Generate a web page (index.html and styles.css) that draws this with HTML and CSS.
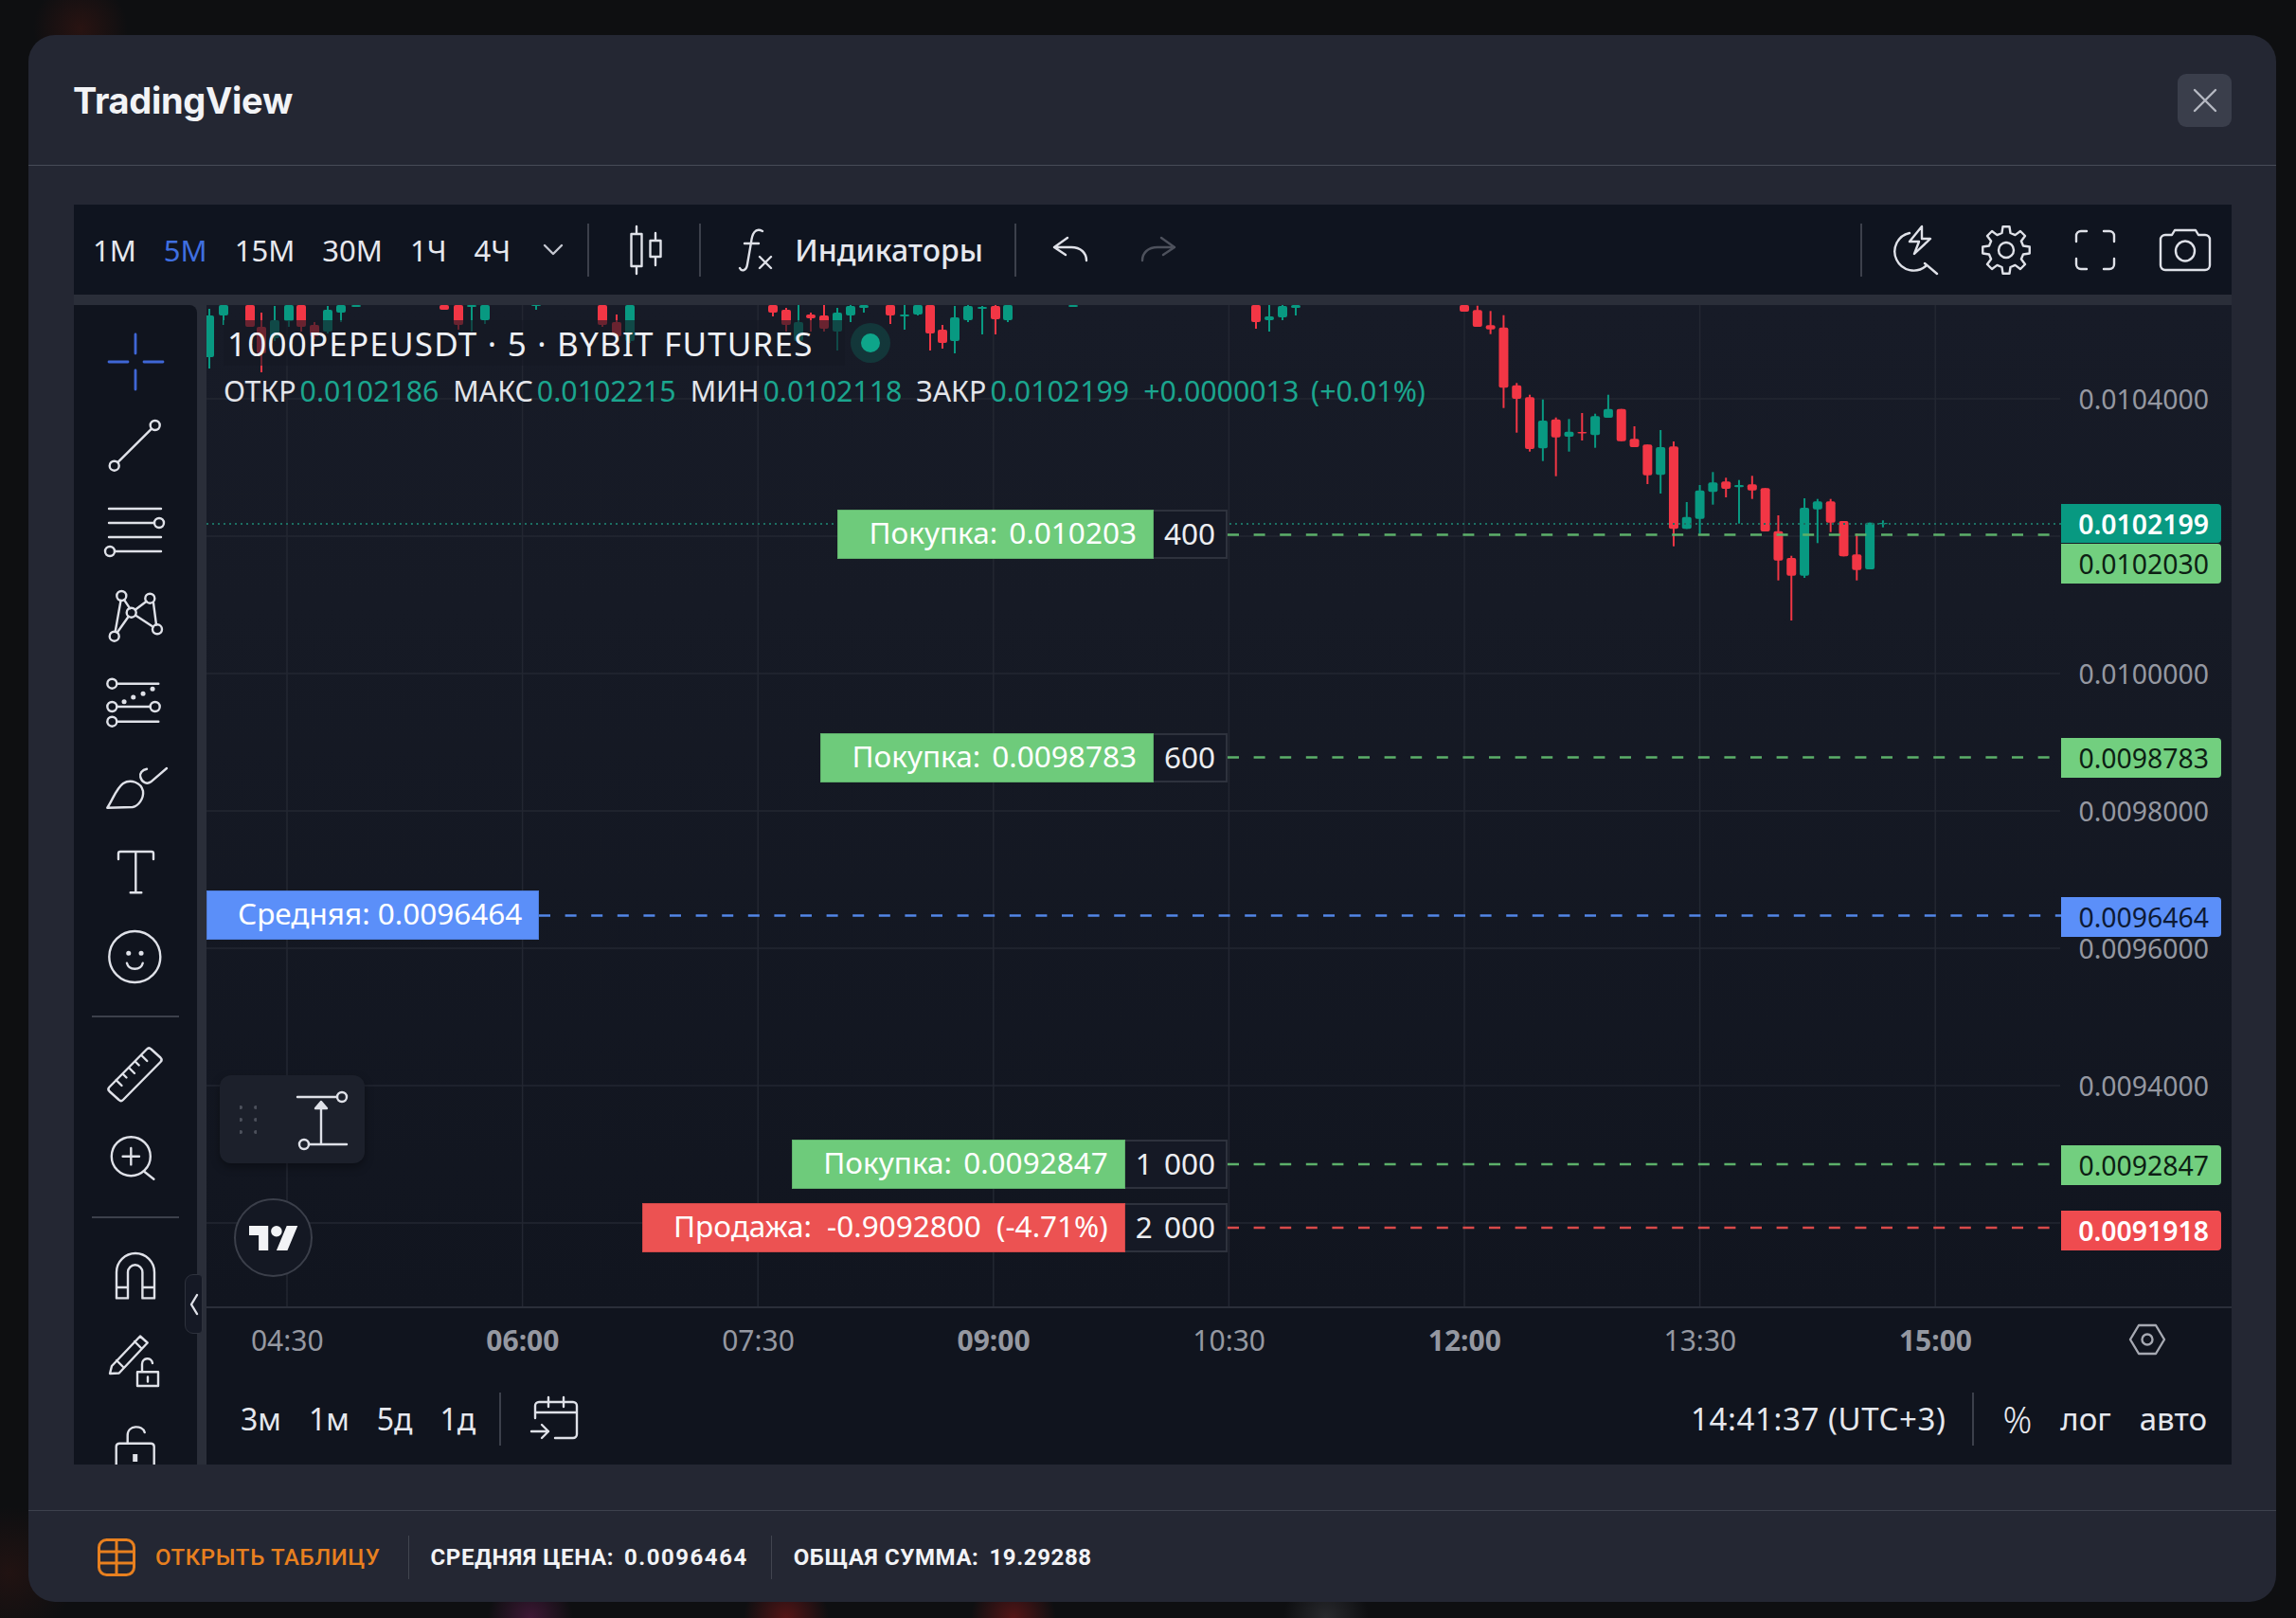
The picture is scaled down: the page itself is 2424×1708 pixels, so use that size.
FILE: index.html
```html
<!DOCTYPE html>
<html lang="ru">
<head>
  <meta charset="UTF-8">
  <title>TradingView</title>
  <link rel="stylesheet" href="styles.css">
</head>
<body>
  <div class="modal">
    <header class="modal-head">
      <h2 class="modal-title">TradingView</h2>
      <button class="close-btn" type="button">
        <svg class="ico" width="24" height="24" viewBox="0 0 24 24"><path d="M1 1l22 22M23 1L1 23"/></svg>
      </button>
    </header>

    <div class="modal-body">
      <div class="tv">
        <!-- top toolbar -->
        <div class="top-bar">
          <div class="intervals">
            <span>1М</span>
            <span class="active">5М</span>
            <span>15М</span>
            <span>30М</span>
            <span>1Ч</span>
            <span>4Ч</span>
          </div>
          <svg class="ico chevron" width="20" height="12" viewBox="0 0 20 12"><path d="M1 1l9 9 9-9"/></svg>
          <i class="sep sep-a"></i>
          <svg class="ico candle-ico" width="40" height="50" viewBox="0 0 40 50"><path d="M10 0v8M10 42v8M30 7v8M30 32v9M4.500 8h11v34h-11zM24.500 15h11v17h-11z"/></svg>
          <i class="sep sep-b"></i>
          <svg class="ico fx-ico" width="36" height="50" viewBox="0 0 36 50"><path d="M24 5C16 1 13 8 12 17L8 40C7 47 2 48 0 44M5 18H20M21 32l12 12M33 32L21 44"/></svg>
          <span class="indicators">Индикаторы</span>
          <i class="sep sep-c"></i>
          <svg class="ico undo-ico" width="38" height="30" viewBox="0 0 38 30"><path d="M16 2L2 12l12 8M2 12h18c10 0 16 6 16 14"/></svg>
          <svg class="ico redo-ico" width="38" height="30" viewBox="0 0 38 30"><path d="M22 2l14 10-12 8M36 12H18C8 12 2 18 2 26"/></svg>

          <i class="sep sep-d"></i>
          <svg class="ico flash-ico" width="48" height="54" viewBox="0 0 48 54"><path d="M17 9A20 20 0 1 0 34 44M33 41l13 11M30 2L17 18h10l-5 13 17-16h-9z"/></svg>
          <svg class="ico gear-ico" width="52" height="52" viewBox="0 0 52 52">
            <path d="M21.500 8L22.500 1.250h7L30.500 8 35.500 10.100 41 6l5 5-4.100 5.500 2.100 5 6.750 1v7l-6.750 1-2.100 5L46 41l-5 5-5.500-4.100-5 2.100-1 6.750h-7l-1-6.750-5-2.100L11 46l-5-5 4.100-5.500-2.100-5-6.750-1v-7l6.750-1 2.100-5L6 11l5-5 5.500 4.100z"/>
            <circle cx="26" cy="26" r="8"/>
          </svg>
          <svg class="ico frame-ico" width="42" height="42" viewBox="0 0 42 42"><path d="M1 12V6a5 5 0 0 1 5-5h6M30 1h6a5 5 0 0 1 5 5v6M41 30v6a5 5 0 0 1-5 5h-6M12 41H6a5 5 0 0 1-5-5v-6"/></svg>
          <svg class="ico camera-ico" width="54" height="46" viewBox="0 0 54 46"><path d="M6 7h7l3-5h22l3 5h7a5 5 0 0 1 5 5v27a5 5 0 0 1-5 5H6a5 5 0 0 1-5-5V12a5 5 0 0 1 5-5z"/><ellipse cx="27" cy="24" rx="10" ry="10.500"/></svg>
        </div>

        <div class="tv-main">
          <!-- drawing tools -->
          <aside class="rail">
            <div class="tool"><svg class="ico blue" width="60" height="60" viewBox="0 0 60 60"><path d="M30 1v20M30 39v20M2 30h20M39 30h20"/></svg></div>
            <div class="tool"><svg class="ico" width="60" height="60" viewBox="0 0 60 60"><circle cx="50.700" cy="7" r="5"/><circle cx="7.700" cy="49.700" r="5"/><path d="M11.300 46.100L47 10.700"/></svg></div>
            <div class="tool"><svg class="ico" width="60" height="60" viewBox="0 0 60 60"><path d="M2 5h55M2 20h48M2 35h55M8 50h49"/><circle cx="55" cy="20" r="5"/><circle cx="3" cy="50" r="5"/></svg></div>
            <div class="tool"><svg class="ico" width="60" height="60" viewBox="0 0 60 60"><circle cx="15.300" cy="7" r="5"/><circle cx="45.300" cy="9.700" r="5"/><circle cx="25.700" cy="24.700" r="5"/><circle cx="53" cy="42.300" r="5"/><circle cx="7.700" cy="49.700" r="5"/><path d="M14.500 12L8.700 44.800M10.700 45.700l12-17M18.200 11.300l6 9M29.700 21.700l12-9M49 14.500l3 23M30 27.500L48.700 39.700"/></svg></div>
            <div class="tool"><svg class="ico" width="60" height="60" viewBox="0 0 60 60"><circle cx="5.300" cy="9.700" r="5"/><path d="M10.300 9.700h44"/><circle cx="5.300" cy="34" r="5"/><circle cx="50.700" cy="34" r="5"/><path d="M10.300 34h35.400"/><circle cx="5.300" cy="49.700" r="5"/><path d="M10.300 49.700h44"/><path class="dots" d="M18 28.700h.1M27.700 24h.1M38 20.300h.1M48 15.300h.1"/></svg></div>
            <div class="tool"><svg class="ico" width="60" height="60" viewBox="0 0 60 60"><path d="M.3 50.700C6 42 10 30 17 25c8-5 19-1 21 8 1 8-5 16-11 17zM42 9.700c-5 1-8 5-6.700 8.600 1.700 6 7 8 11 5L63 9"/></svg></div>
            <div class="tool"><svg class="ico" width="60" height="60" viewBox="0 0 60 60"><path d="M12 15V9a2 2 0 0 1 2-2h33a2 2 0 0 1 2 2v6M30.300 7v43.300M24.700 50.300h11.600"/></svg></div>
            <div class="tool"><svg class="ico" width="60" height="60" viewBox="0 0 60 60"><circle cx="29.300" cy="28" r="27"/><path class="dots" d="M22.700 24.300h.1M36 24.300h.1"/><path d="M21 34.700c2 8 14.700 8 16.700 0"/></svg></div>
            <div class="rail-line"></div>
            <div class="tool"><svg class="ico" width="60" height="60" viewBox="0 0 60 60"><path d="M42 3.500c1.500-1.500 3-1.500 4.500 0l10 9c1.500 1.500 1.500 3 0 4.500L17 57c-1.500 1.500-3 1.500-4.500 0l-10-9c-1.500-1.500-1.500-3 0-4.500zM9.500 36l6 6M16.500 29.500l4 4M23 23l6 6M29.700 16.500l4 4M36.300 10l6 6"/></svg></div>
            <div class="tool"><svg class="ico" width="60" height="60" viewBox="0 0 60 60"><circle cx="25.300" cy="26.700" r="20.500"/><path d="M25.300 18v17.400M16.600 26.700H34M39.600 43l9.800 7.700"/></svg></div>
            <div class="rail-line"></div>
            <div class="tool"><svg class="ico" width="60" height="60" viewBox="0 0 60 60"><path d="M10 54.400V27a20 20 0 0 1 40 0v27.400H37.400V27a7.700 7.700 0 0 0-15.400 0v27.400zM10 43h12M37.400 43H50"/></svg></div>
            <div class="tool"><svg class="ico" width="60" height="60" viewBox="0 0 60 60"><path d="M3 44l2-8L35 4.500l7.700 7-30 32zM10 30l7 7M29 10l7 7M32 42.300h22v14.700H32zM37 42V34c0-7 10-8 11-1M43 47.500v5"/></svg></div>
            <div class="tool"><svg class="ico" width="60" height="60" viewBox="0 0 60 60"><path d="M9.700 62V31a3.500 3.500 0 0 1 3.500-3.300h33a3.500 3.500 0 0 1 3.500 3.300v31M21.700 27.700V19c0-11 16-11 18-3"/><path class="keyhole" d="M29.700 39v8"/></svg></div>
            <div class="rail-handle"><svg class="ico" width="10" height="22" viewBox="0 0 10 22"><path d="M8 1L2 11l6 10"/></svg></div>
          </aside>

          <div class="chart-col">
            <div class="chart">
              <svg class="chart-svg" width="2138" height="1058" viewBox="218 322 2138 1058">
                <g id="grid"></g>
                <g id="candles"></g>
                <line class="last-line" x1="218" y1="553" x2="2176" y2="553"/>
                <line class="dash dash-buy" x1="1296" y1="564.500" x2="2176" y2="564.500"/>
                <line class="dash dash-buy" x1="1296" y1="799.500" x2="2176" y2="799.500"/>
                <line class="dash dash-avg" x1="569" y1="966.500" x2="2176" y2="966.500"/>
                <line class="dash dash-buy" x1="1296" y1="1229" x2="2176" y2="1229"/>
                <line class="dash dash-sell" x1="1296" y1="1296" x2="2176" y2="1296"/>
              </svg>

              <div class="legend">
                <div class="legend-title">
                  <span>1000PEPEUSDT · 5 · BYBIT FUTURES</span>
                  <i class="live-dot"></i>
                </div>
                <div class="legend-ohlc">
                  <span class="pair">ОТКР<b>0.0102186</b></span>
                  <span class="pair">МАКС<b>0.0102215</b></span>
                  <span class="pair">МИН<b>0.0102118</b></span>
                  <span class="pair">ЗАКР<b>0.0102199</b></span>
                  <span class="pair"><b class="change">+0.0000013 (+0.01%)</b></span>
                </div>
              </div>

              <!-- price scale -->
              <span class="tick tick-a">0.0104000</span>
              <span class="tick tick-b">0.0100000</span>
              <span class="tick tick-c">0.0098000</span>
              <span class="tick tick-d">0.0096000</span>
              <span class="tick tick-e">0.0094000</span>

              <span class="tag tag-last">0.0102199</span>
              <span class="tag tag-buy tag-1">0.0102030</span>
              <span class="tag tag-buy tag-2">0.0098783</span>
              <span class="tag tag-avg tag-3">0.0096464</span>
              <span class="tag tag-buy tag-4">0.0092847</span>
              <span class="tag tag-sell tag-5">0.0091918</span>

              <!-- orders -->
              <div class="order order-1"><span class="order-label buy">Покупка: 0.010203</span><span class="order-qty">400</span></div>
              <div class="order order-2"><span class="order-label buy">Покупка: 0.0098783</span><span class="order-qty">600</span></div>
              <div class="order order-3"><span class="order-label avg">Средняя: 0.0096464</span></div>
              <div class="order order-4"><span class="order-label buy">Покупка: 0.0092847</span><span class="order-qty">1 000</span></div>
              <div class="order order-5"><span class="order-label sell">Продажа: -0.9092800 (-4.71%)</span><span class="order-qty">2 000</span></div>

              <!-- floating drawing panel -->
              <div class="float-panel">
                <svg class="grip" width="18" height="30" viewBox="0 0 18 30"><path d="M1 2h.1M17 2h.1M1 15h.1M17 15h.1M1 28h.1M17 28h.1"/></svg>
                <svg class="ico" width="60" height="64" viewBox="0 0 60 64"><path d="M3 8h42M28 58V14M15 58h40"/><circle cx="50" cy="8" r="5"/><circle cx="10" cy="58" r="5"/><path class="fill" d="M28 13l-6 7h12z"/></svg>
              </div>

              <a class="tv-logo"><svg width="52" height="26" viewBox="0 4 36 18"><path d="M14 22H7V11H0V4h14v18zM28 22h-8l7.500-18h8L28 22z"/><circle cx="20" cy="8" r="4"/></svg></a>
            </div>

            <div class="time-axis">
              <span>04:30</span>
              <span class="major">06:00</span>
              <span>07:30</span>
              <span class="major">09:00</span>
              <span>10:30</span>
              <span class="major">12:00</span>
              <span>13:30</span>
              <span class="major">15:00</span>
              <svg class="ico hex-ico" width="38" height="34" viewBox="0 0 38 34"><path d="M10 2h18l9 15-9 15H10L1 17z"/><circle cx="19" cy="17" r="5.500"/></svg>
            </div>

            <div class="range-bar">
              <div class="ranges">
                <span>3м</span>
                <span>1м</span>
                <span>5д</span>
                <span>1д</span>
              </div>
              <i class="sep sep-e"></i>
              <svg class="ico cal-ico" width="52" height="48" viewBox="0 0 52 48"><path d="M5 23V10a4 4 0 0 1 4-4h36a4 4 0 0 1 4 4v30a4 4 0 0 1-4 4H26M5 17h44M19 1v10M35 1v10M1 37h18M12 30l7 7-7 7"/></svg>
              <div class="range-right">
                <span class="clock">14:41:37 (UTC+3)</span>
                <i class="sep sep-f"></i>
                <span class="pct">%</span>
                <span>лог</span>
                <span>авто</span>
              </div>
            </div>
          </div>
        </div>
      </div>
    </div>

    <footer class="modal-foot">
      <svg class="table-ico" width="40" height="40" viewBox="0 0 40 40"><rect x="1.500" y="1.500" width="37" height="37" rx="8"/><path d="M20 2v36M2 14h36M2 26h36"/></svg>
      <span class="open-table">ОТКРЫТЬ ТАБЛИЦУ</span>
      <i class="foot-sep"></i>
      <span class="stat stat-avg"><span>СРЕДНЯЯ ЦЕНА:</span><span>0.0096464</span></span>
      <i class="foot-sep"></i>
      <span class="stat"><span>ОБЩАЯ СУММА:</span><span>19.29288</span></span>
    </footer>
  </div>

  <script src="chart.js"></script>
</body>
</html>
```

FILE: styles.css
```css
* {
  margin: 0;
  padding: 0;
  box-sizing: border-box;
}
body {
  width: 2424px;
  height: 1708px;
  padding: 37px 21px 17px 30px;
  overflow: hidden;
  font-family: "Noto Sans", sans-serif;
  color: #e6e8ee;
  background-color: #0e0f11;
  background-image:
    radial-gradient(circle at 85px 30px, rgba(110, 30, 20, .28), transparent 50px),
    radial-gradient(circle at 10px 1660px, rgba(90, 30, 20, .25), transparent 70px),
    radial-gradient(circle at 560px 1708px, rgba(150, 40, 120, .35), transparent 45px),
    radial-gradient(circle at 830px 1708px, rgba(190, 30, 30, .4), transparent 45px),
    radial-gradient(circle at 1070px 1708px, rgba(190, 30, 30, .4), transparent 45px),
    radial-gradient(circle at 1400px 1708px, rgba(120, 120, 130, .25), transparent 45px);
}

.modal {
  width: 2373px;
  height: 1654px;
  display: flex;
  flex-direction: column;
  background: #242733;
  border-radius: 28px;
}
.modal-head {
  flex: none;
  height: 138px;
  display: flex;
  align-items: center;
  justify-content: space-between;
  padding: 0 47px 0 47px;
  border-bottom: 1px solid #474b57;
}
.modal-title {
  font-family: Inter, sans-serif;
  font-size: 38px;
  font-weight: 700;
  letter-spacing: -.3px;
  color: #f2f3f6;
}
.close-btn {
  width: 57px;
  height: 56px;
  display: flex;
  align-items: center;
  justify-content: center;
  background: #3a3e4b;
  border: none;
  border-radius: 9px;
}
.close-btn .ico {
  stroke: #b5b8c2;
}

.modal-body {
  flex: 1;
  min-height: 0;
  padding: 41px 47px 48px 48px;
}
.modal-foot {
  flex: none;
  height: 97px;
  display: flex;
  align-items: center;
  padding: 2px 0 0 73px;
  border-top: 1px solid #3d414d;
  font-family: Roboto, sans-serif;
  font-size: 24px;
  letter-spacing: .6px;
}
.table-ico {
  fill: none;
  stroke: #e8801f;
  stroke-width: 3;
}
.open-table {
  margin: 0 29px 0 21px;
  font-weight: 500;
  color: #e8801f;
}
.foot-sep {
  width: 1px;
  height: 46px;
  background: #41454f;
}
.stat {
  display: flex;
  gap: 11px;
  margin: 0 24px 0 23px;
  font-weight: 700;
  color: #f2f3f6;
}
.stat-avg span:last-child {
  letter-spacing: 1.5px;
}

.tv {
  height: 100%;
  display: flex;
  flex-direction: column;
  gap: 11px;
  background: #2a2e39;
}
.top-bar {
  flex: none;
  height: 95px;
  display: flex;
  align-items: center;
  background: #0f141f;
  font-size: 31px;
}
.intervals {
  display: flex;
  gap: 29px;
  margin-left: 20px;
}
.active {
  color: #3f6fe0;
}
.indicators {
  margin-left: 22px;
  font-size: 32px;
  font-weight: 500;
}
.ico {
  flex: none;
  display: block;
  fill: none;
  stroke: #dfe1e8;
  stroke-width: 2.4;
  stroke-linecap: round;
  stroke-linejoin: round;
  overflow: visible;
}
.ico .dots {
  stroke-width: 5;
}
.ico .fill {
  fill: #dfe1e8;
}
.ico .keyhole {
  stroke-width: 5;
  stroke-linecap: butt;
}
.ico.blue {
  stroke: #3f66d6;
  stroke-width: 2.8;
}
.chevron {
  margin-left: 35px;
  stroke: #c4c7d0;
}
.sep {
  flex: none;
  width: 2px;
  height: 56px;
  background: #3c404b;
}
.sep-a {
  margin-left: 26px;
}
.candle-ico {
  margin-left: 40px;
}
.sep-b {
  margin-left: 36px;
}
.fx-ico {
  margin-left: 41px;
}
.sep-c {
  margin-left: 33px;
}
.undo-ico {
  margin-left: 38px;
}
.redo-ico {
  margin-left: 55px;
  stroke: #4d515c;
}
.sep-d {
  margin-left: auto;
}
.flash-ico {
  margin-left: 33px;
}
.gear-ico {
  margin-left: 45px;
}
.frame-ico {
  margin-left: 47px;
}
.camera-ico {
  margin: 0 22px 0 47px;
}

.tv-main {
  flex: 1;
  min-height: 0;
  display: flex;
  gap: 10px;
  overflow: hidden;
}
.rail {
  position: relative;
  z-index: 2;
  flex: none;
  width: 130px;
  padding-top: 15px;
  background: #10141e;
  border-radius: 0 8px 0 0;
}
.tool {
  height: 90px;
  display: flex;
  align-items: center;
  justify-content: center;
}
.rail-line {
  height: 2px;
  margin: 15px 19px;
  background: #3c404b;
}
.rail-handle {
  position: absolute;
  top: 1023px;
  right: -6px;
  width: 19px;
  height: 63px;
  display: flex;
  align-items: center;
  justify-content: center;
  background: #151925;
  border: 1px solid #2e323d;
  border-radius: 9px 4px 4px 9px;
}

.chart-col {
  flex: 1;
  min-width: 0;
  display: flex;
  flex-direction: column;
  background: #10141e;
}
.chart {
  position: relative;
  flex: none;
  height: 1059px;
  background: linear-gradient(#171b27, #161a25 30%, #11151f);
  border-bottom: 2px solid #2a2e39;
  overflow: hidden;
}
.chart-svg {
  display: block;
}
.grid-line {
  stroke: #232732;
  stroke-width: 1.5;
}
.wick {
  stroke-width: 2;
}
.up {
  fill: #089981;
  stroke: #089981;
}
.down {
  fill: #f23645;
  stroke: #f23645;
}
.body {
  stroke: none;
}
.last-line {
  stroke: #1c6f62;
  stroke-width: 2;
  stroke-dasharray: 2 4;
}
.dash {
  stroke-width: 2.5;
  stroke-dasharray: 12 15.600;
}
.dash-buy {
  stroke: #5cb06a;
}
.dash-avg {
  stroke: #5286e8;
}
.dash-sell {
  stroke: #d94a4a;
}

.legend {
  position: absolute;
  top: 16px;
  left: 18px;
}
.legend-title {
  width: 656px;
  height: 48px;
  display: flex;
  align-items: center;
  padding-left: 4px;
  font-size: 35px;
  letter-spacing: 1.2px;
  color: #eef0f4;
  background: rgba(21, 25, 36, .62);
}
.legend-title span {
  flex: none;
  white-space: nowrap;
}
.live-dot {
  flex: none;
  width: 20px;
  height: 20px;
  margin-left: 50px;
  background: #0ea58a;
  border-radius: 50%;
  box-shadow: 0 0 0 11px rgba(8, 153, 129, .22);
}
.legend-ohlc {
  display: flex;
  gap: 15px;
  margin-top: 6px;
  font-size: 30.300px;
  white-space: nowrap;
  color: #e3e5ea;
}
.pair b {
  margin-left: 4px;
  font-weight: 400;
  color: #1ba58e;
}
.pair .change {
  margin-left: 0;
  word-spacing: 5px;
}

.tick {
  position: absolute;
  right: 24px;
  line-height: 24px;
  font-size: 28.400px;
  color: #9598a1;
}
.tick-a { top: 87px; }
.tick-b { top: 377px; }
.tick-c { top: 522px; }
.tick-d { top: 667px; }
.tick-e { top: 812px; }

.tag {
  position: absolute;
  right: 11px;
  width: 169px;
  height: 42px;
  padding-right: 13px;
  line-height: 42px;
  text-align: right;
  font-size: 28.400px;
  color: #0d1f14;
  border-radius: 0 4px 4px 0;
}
.tag-last {
  top: 210px;
  height: 41px;
  font-weight: 600;
  color: #fff;
  background: #089981;
}
.tag-buy { background: #72cf7f; }
.tag-avg {
  color: #0d1a35;
  background: #5b8ff9;
}
.tag-sell {
  font-weight: 600;
  color: #fff;
  background: #ef4b4f;
}
.tag-1 { top: 252px; }
.tag-2 { top: 457px; }
.tag-3 { top: 625px; }
.tag-4 { top: 887px; }
.tag-5 { top: 956px; }

.order {
  position: absolute;
  right: 1060px;
  height: 52px;
  display: flex;
  font-size: 31.500px;
  line-height: 46px;
  word-spacing: 4px;
  white-space: nowrap;
}
.order-1 { top: 216px; }
.order-2 { top: 452px; }
.order-3 {
  top: 618px;
  right: auto;
  left: 0;
}
.order-4 { top: 881px; }
.order-5 { top: 948px; }
.order-label {
  padding: 0 17px 0 32px;
  color: #fff;
  border: 1px solid rgba(0, 0, 0, .12);
}
.buy { background: #6ecb7b; }
.avg {
  word-spacing: 0;
  background: #5b8ff9;
}
.sell {
  word-spacing: 8px;
  background: #ec5252;
}
.order-qty {
  min-width: 78px;
  padding: 0 11px;
  word-spacing: 4px;
  color: #ecedf0;
  background: #151925;
  border: 2px solid #2e323d;
  border-left: none;
}

.float-panel {
  position: absolute;
  top: 813px;
  left: 14px;
  width: 153px;
  height: 93px;
  display: flex;
  align-items: center;
  gap: 40px;
  padding-left: 21px;
  background: #1c202b;
  border-radius: 12px;
  box-shadow: 0 4px 10px rgba(0, 0, 0, .35);
}
.grip {
  flex: none;
  fill: none;
  stroke: #4c505b;
  stroke-width: 4;
  stroke-linecap: round;
}
.tv-logo {
  position: absolute;
  top: 943px;
  left: 29px;
  width: 83px;
  height: 83px;
  display: flex;
  align-items: center;
  justify-content: center;
  background: #141823;
  border: 2px solid #3b3f4a;
  border-radius: 50%;
}
.tv-logo svg {
  fill: #f2f3f6;
}

.time-axis {
  flex: none;
  height: 66px;
  display: grid;
  grid-template-columns: repeat(8, 248.600px) 1fr;
  align-items: center;
  margin-left: -39px;
  font-size: 30px;
  text-align: center;
  color: #9598a1;
}
.major {
  font-weight: 700;
}
.hex-ico {
  margin-left: 80px;
  stroke: #a6a9b2;
}

.range-bar {
  flex: 1;
  display: flex;
  align-items: center;
  padding: 2px 26px 0 36px;
  font-size: 32px;
}
.ranges {
  display: flex;
  gap: 29px;
}
.sep-e {
  margin-left: 25px;
}
.cal-ico {
  margin-left: 31px;
}
.range-right {
  margin-left: auto;
  display: flex;
  align-items: center;
  gap: 30px;
  font-size: 33px;
}
.clock {
  margin-right: -2px;
  letter-spacing: .6px;
}
.pct {
  font-size: 38px;
  font-weight: 300;
}
```

FILE: chart.js
```js
// draws the grid and the candles, all numbers are page pixels
const NS = 'http://www.w3.org/2000/svg';
const TOP = 322;

function add(parent, tag, attrs) {
  const el = document.createElementNS(NS, tag);
  Object.keys(attrs).forEach(k => el.setAttribute(k, attrs[k]));
  parent.appendChild(el);
}

const grid = document.getElementById('grid');
for (let i = 0; i < 8; i++) {
  const x = 303 + i * 248.6;
  add(grid, 'line', { class: 'grid-line', x1: x, y1: TOP, x2: x, y2: 1380 });
}
for (let i = 0; i < 7; i++) {
  const y = 421 + i * 145;
  add(grid, 'line', { class: 'grid-line', x1: 218, y1: y, x2: 2175, y2: y });
}

// [x, high, bodyTop, bodyBottom, low, dir]
const older = [
  [221, 326, 333, 377, 389, 'up'], [236, 322, 322, 333, 343, 'up'], [264, 322, 322, 345, 345, 'down'],
  [276, 330, 345, 373, 393, 'down'], [290, 323, 338, 357, 360, 'up'], [305, 322, 322, 339, 345, 'up'],
  [318, 322, 322, 345, 350, 'down'], [332, 340, 343, 355, 358, 'down'], [346, 323, 327, 350, 352, 'up'],
  [360, 322, 322, 330, 340, 'up'], [376, 322, 322, 324, 324, 'up'], [469, 322, 322, 327, 327, 'down'],
  [484, 322, 322, 343, 348, 'down'], [498, 322, 322, 324, 350, 'up'], [512, 322, 322, 338, 342, 'up'],
  [566, 322, 322, 323, 327, 'up'], [636, 322, 322, 343, 345, 'down'], [651, 332, 340, 355, 367, 'down'],
  [665, 322, 322, 360, 362, 'up'], [816, 322, 322, 330, 334, 'down'], [830, 325, 327, 343, 350, 'down'],
  [843, 322, 340, 360, 362, 'up'], [856, 330, 332, 336, 350, 'down'], [870, 322, 333, 347, 350, 'down'],
  [884, 325, 330, 350, 370, 'up'], [898, 322, 323, 333, 340, 'up'], [912, 322, 322, 325, 330, 'up'],
  [940, 322, 322, 333, 342, 'down'], [955, 322, 332, 334, 348, 'up'], [969, 322, 322, 332, 333, 'up'],
  [982, 322, 322, 352, 370, 'down'], [995, 343, 348, 362, 368, 'down'], [1008, 323, 335, 360, 373, 'up'],
  [1022, 322, 323, 338, 340, 'up'], [1037, 323, 324, 326, 353, 'up'], [1051, 322, 323, 337, 353, 'down'],
  [1064, 322, 322, 338, 340, 'up'], [1133, 322, 322, 324, 324, 'up'], [1326, 322, 322, 340, 347, 'down'],
  [1340, 322, 334, 338, 350, 'up'], [1354, 322, 323, 335, 338, 'up'], [1368, 322, 322, 325, 333, 'up']
];

// from 12:00 on, one candle every 13.81px
const recent = [
  [322, 322, 329, 329, 'down'], [322.7, 327.3, 345, 345, 'down'], [328.3, 343.3, 347.7, 352.7, 'down'],
  [332.7, 345.7, 409.3, 430.7, 'down'], [404.3, 406.7, 421, 456.7, 'down'], [416.7, 419.3, 474, 476.7, 'down'],
  [421.7, 444, 473.3, 486.7, 'up'], [440.7, 442.7, 461.7, 502.7, 'down'], [442.3, 455.7, 461, 476.7, 'up'],
  [436, 456, 457.5, 465, 'down'], [436.7, 439.3, 459.3, 472.7, 'up'], [416.7, 431.7, 441, 441, 'up'],
  [431.7, 431.7, 465.7, 465.7, 'down'], [450, 463.3, 472, 472, 'down'], [469.3, 469.3, 501.7, 511, 'down'],
  [454, 472, 501.3, 521, 'up'], [466, 471.3, 558.3, 576.7, 'down'], [530, 545.7, 558.3, 558.3, 'up'],
  [512, 517.7, 547.7, 563.3, 'up'], [498.3, 509.3, 519.3, 532.7, 'up'], [504.3, 508.3, 516, 525, 'down'],
  [506.7, 512, 514.3, 552.7, 'up'], [502.3, 511.3, 517.7, 526.7, 'down'], [515.3, 515.3, 561, 561, 'down'],
  [544, 560.7, 591.7, 612.7, 'down'], [586.7, 589, 607.7, 655, 'down'], [526, 536, 607.7, 610, 'up'],
  [526.7, 529.3, 537.7, 573.3, 'up'], [526.7, 529.3, 551.7, 561.7, 'down'], [550, 550, 587.3, 587.3, 'down'],
  [563.3, 585.3, 601.7, 612.7, 'down'], [551.7, 551.7, 601, 601, 'up'], [549.3, 552, 553.3, 556.7, 'up']
];

const all = older.concat(recent.map((c, i) => [1546 + i * 13.81].concat(c)));
const layer = document.getElementById('candles');
all.forEach(([x, high, top, bottom, low, dir]) => {
  add(layer, 'line', { class: 'wick ' + dir, x1: x, y1: high, x2: x, y2: low });
  add(layer, 'rect', { class: 'body ' + dir, x: x - 5, y: top, width: 10, height: bottom - top, rx: 2 });
});
```
